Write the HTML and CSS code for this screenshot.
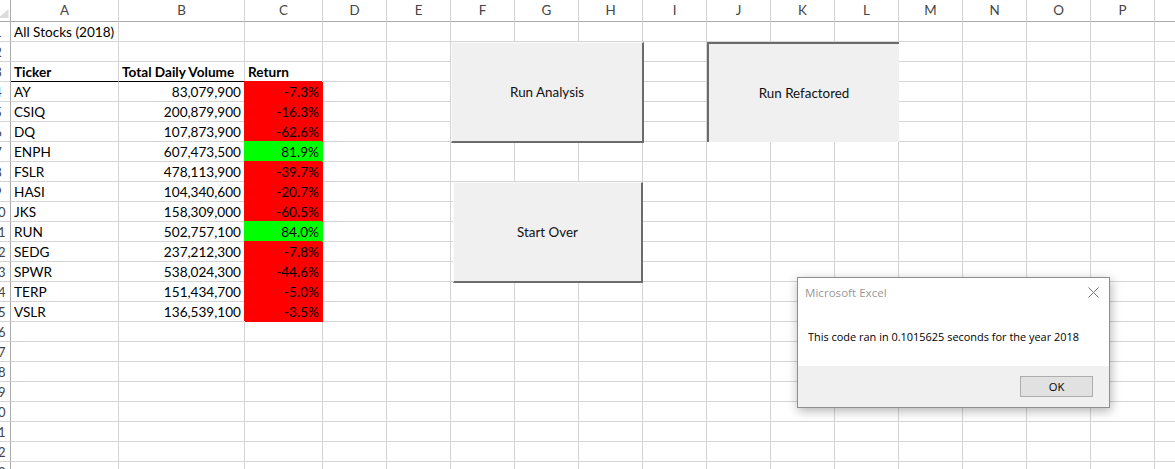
FILE: index.html
```html
<!DOCTYPE html>
<html>
<head>
<meta charset="utf-8">
<link rel="stylesheet" href="styles.css">
</head>
<body>
<div class="sheet">
  <div class="row hdr">
    <div class="rh corner"><svg width="11" height="21" viewBox="0 0 11 21"><polygon points="0,18 8.5,18 8.5,9 0,16.5" fill="#dcdcdc"/></svg></div>
    <div class="ca">A</div><div class="cb">B</div><div class="cc">C</div>
    <div class="cn">D</div><div class="cn">E</div><div class="cn">F</div><div class="cn">G</div><div class="cn">H</div><div class="cn">I</div><div class="cn">J</div><div class="cn">K</div><div class="cn">L</div><div class="cn">M</div><div class="cn">N</div><div class="cn">O</div><div class="cn">P</div><div class="cq"></div>
  </div>
  <div class="row"><div class="rh"><span>1</span></div><div class="ca">All Stocks (2018)</div><div class="cb"></div><div class="cc"></div><div class="rest"></div></div>
  <div class="row"><div class="rh"><span>2</span></div><div class="ca"></div><div class="cb"></div><div class="cc"></div><div class="rest"></div></div>
  <div class="row"><div class="rh"><span>3</span></div><div class="ca bold bb">Ticker</div><div class="cb bold bb">Total Daily Volume</div><div class="cc bold">Return</div><div class="rest"></div></div>
  <div class="row"><div class="rh"><span>4</span></div><div class="ca">AY</div><div class="cb num">83,079,900</div><div class="cc num red">-7.3%</div><div class="rest"></div></div>
  <div class="row"><div class="rh"><span>5</span></div><div class="ca">CSIQ</div><div class="cb num">200,879,900</div><div class="cc num red">-16.3%</div><div class="rest"></div></div>
  <div class="row"><div class="rh"><span>6</span></div><div class="ca">DQ</div><div class="cb num">107,873,900</div><div class="cc num red">-62.6%</div><div class="rest"></div></div>
  <div class="row"><div class="rh"><span>7</span></div><div class="ca">ENPH</div><div class="cb num">607,473,500</div><div class="cc num green">81.9%</div><div class="rest"></div></div>
  <div class="row"><div class="rh"><span>8</span></div><div class="ca">FSLR</div><div class="cb num">478,113,900</div><div class="cc num red">-39.7%</div><div class="rest"></div></div>
  <div class="row"><div class="rh"><span>9</span></div><div class="ca">HASI</div><div class="cb num">104,340,600</div><div class="cc num red">-20.7%</div><div class="rest"></div></div>
  <div class="row"><div class="rh"><span>10</span></div><div class="ca">JKS</div><div class="cb num">158,309,000</div><div class="cc num red">-60.5%</div><div class="rest"></div></div>
  <div class="row"><div class="rh"><span>11</span></div><div class="ca">RUN</div><div class="cb num">502,757,100</div><div class="cc num green">84.0%</div><div class="rest"></div></div>
  <div class="row"><div class="rh"><span>12</span></div><div class="ca">SEDG</div><div class="cb num">237,212,300</div><div class="cc num red">-7.8%</div><div class="rest"></div></div>
  <div class="row"><div class="rh"><span>13</span></div><div class="ca">SPWR</div><div class="cb num">538,024,300</div><div class="cc num red">-44.6%</div><div class="rest"></div></div>
  <div class="row"><div class="rh"><span>14</span></div><div class="ca">TERP</div><div class="cb num">151,434,700</div><div class="cc num red">-5.0%</div><div class="rest"></div></div>
  <div class="row"><div class="rh"><span>15</span></div><div class="ca">VSLR</div><div class="cb num">136,539,100</div><div class="cc num red">-3.5%</div><div class="rest"></div></div>
  <div class="row"><div class="rh"><span>16</span></div><div class="ca"></div><div class="cb"></div><div class="cc"></div><div class="rest"></div></div>
  <div class="row"><div class="rh"><span>17</span></div><div class="ca"></div><div class="cb"></div><div class="cc"></div><div class="rest"></div></div>
  <div class="row"><div class="rh"><span>18</span></div><div class="ca"></div><div class="cb"></div><div class="cc"></div><div class="rest"></div></div>
  <div class="row"><div class="rh"><span>19</span></div><div class="ca"></div><div class="cb"></div><div class="cc"></div><div class="rest"></div></div>
  <div class="row"><div class="rh"><span>20</span></div><div class="ca"></div><div class="cb"></div><div class="cc"></div><div class="rest"></div></div>
  <div class="row"><div class="rh"><span>21</span></div><div class="ca"></div><div class="cb"></div><div class="cc"></div><div class="rest"></div></div>
  <div class="row"><div class="rh"><span>22</span></div><div class="ca"></div><div class="cb"></div><div class="cc"></div><div class="rest"></div></div>
  <div class="row"><div class="rh"><span>23</span></div><div class="ca"></div><div class="cb"></div><div class="cc"></div><div class="rest"></div></div>
</div>

<div class="shape raised b1">Run Analysis</div>
<div class="shape pressed b2">Run Refactored</div>
<div class="shape raised b3">Start Over</div>

<div class="dialog">
  <div class="dtitle"><span>Microsoft Excel</span><svg class="close" width="11" height="11" viewBox="0 0 11 11"><path d="M0.5 0.5 L10.5 10.5 M10.5 0.5 L0.5 10.5" stroke="#777" stroke-width="1" fill="none"/></svg></div>
  <div class="dbody">This code ran in 0.1015625 seconds for the year 2018</div>
  <div class="dfoot"><div class="ok">OK</div></div>
</div>
</body>
</html>
```

FILE: styles.css
```css
html, body {
  margin: 0;
  padding: 0;
}
body {
  width: 1175px;
  height: 469px;
  overflow: hidden;
  background: #fff;
  position: relative;
  font-family: Lato, "Liberation Sans", sans-serif;
  font-size: 13.6px;
  color: #000;
}
.sheet {
  display: flex;
  flex-direction: column;
}
.row {
  display: flex;
  height: 20px;
  flex: none;
}
.row > div {
  box-sizing: border-box;
  height: 20px;
  flex: none;
  border-bottom: 1px solid #d4d4d4;
  border-right: 1px solid #d4d4d4;
  white-space: nowrap;
  overflow: visible;
  padding: 0 3px;
  line-height: 20px;
}
.hdr {
  height: 22px;
}
.hdr > div {
  height: 22px;
  line-height: 21px;
  border-bottom-color: #ababab;
  text-align: center;
  color: #444;
  font-size: 13.4px;
  overflow: hidden;
}
.row > .rh {
  width: 11px;
  padding: 0;
  overflow: hidden;
  border-right-color: #ababab;
  color: #444;
  font-size: 13px;
}
.rh span {
  display: block;
  width: 24px;
  margin-left: -14px;
  text-align: center;
}
.corner svg {
  display: block;
}
.ca { width: 108px; }
.cb { width: 126px; }
.cc { width: 78px; }
.cn { width: 64px; }
.row > .cq {
  flex: 1 1 auto;
  border-right: none;
}
.row > .rest {
  flex: 1 1 auto;
  border-right: none;
  padding: 0;
  background: repeating-linear-gradient(to right, transparent 0 63px, #d4d4d4 63px 64px);
}
.num { text-align: right; }
.bold { font-weight: bold; }
.row > .bb { border-bottom-color: #000; }
.row > .red {
  background: #ff0000;
  border-bottom-color: #ff0000;
  border-right-color: #ff0000;
  box-shadow: -1px -1px 0 #ff0000;
}
.row > .green {
  background: #00ff00;
  border-bottom-color: #00ff00;
  border-right-color: #00ff00;
  box-shadow: -1px -1px 0 #00ff00;
}

.shape {
  position: absolute;
  box-sizing: border-box;
  background: #f0f0f0;
  display: flex;
  align-items: center;
  justify-content: center;
  font-size: 13.4px;
  color: #111;
}
.raised {
  border-top: 1px solid #fafafa;
  border-left: 1px solid #fafafa;
  border-right: 2px solid #6b6b6b;
  border-bottom: 2px solid #6b6b6b;
}
.pressed {
  border-top: 2px solid #6b6b6b;
  border-left: 2px solid #6b6b6b;
}
.b1 { left: 451px; top: 42px; width: 193px; height: 101px; }
.b2 { left: 707px; top: 42px; width: 192px; height: 100px; }
.b3 { left: 453px; top: 182px; width: 190px; height: 101px; }

.dialog {
  position: absolute;
  left: 797px;
  top: 277px;
  width: 313px;
  height: 131px;
  box-sizing: border-box;
  border: 1px solid #8f8f8f;
  background: #fff;
  box-shadow: 1px 3px 10px rgba(0, 0, 0, 0.3);
  display: flex;
  flex-direction: column;
  font-family: "Open Sans", "Noto Sans", sans-serif;
  font-size: 10.95px;
}
.dtitle {
  height: 29px;
  flex: none;
  display: flex;
  align-items: center;
  justify-content: space-between;
  padding: 0 10px 0 7px;
  color: #999;
  font-size: 11.6px;
}
.close { display: block; }
.dbody {
  flex: 1 1 auto;
  display: flex;
  align-items: center;
  padding-left: 10px;
  color: #000;
}
.dfoot {
  height: 41px;
  flex: none;
  box-sizing: border-box;
  background: #f0f0f0;
  display: flex;
  justify-content: flex-end;
  align-items: flex-start;
  padding: 10px 16px 0 0;
}
.ok {
  width: 73px;
  height: 21px;
  box-sizing: border-box;
  border: 1px solid #adadad;
  background: #e1e1e1;
  display: flex;
  align-items: center;
  justify-content: center;
  color: #000;
  font-size: 11.2px;
}
```
